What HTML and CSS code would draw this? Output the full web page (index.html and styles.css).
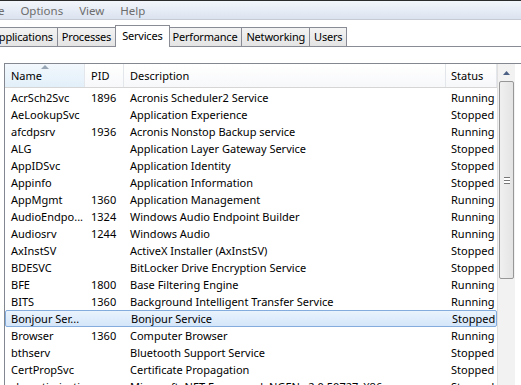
FILE: index.html
```html
<!DOCTYPE html>
<html lang="en">
<head>
    <meta charset="UTF-8">
    <title>Windows Task Manager - Services</title>
    <link rel="stylesheet" href="styles.css">
</head>
<body>

<div class="menubar">
    <span class="menu first">File</span>
    <span class="menu">Options</span>
    <span class="menu">View</span>
    <span class="menu">Help</span>
</div>

<div class="tabstrip">
    <div class="tab first">Applications</div>
    <div class="tab">Processes</div>
    <div class="tab active">Services</div>
    <div class="tab">Performance</div>
    <div class="tab">Networking</div>
    <div class="tab">Users</div>
</div>

<div class="panel">
    <div class="listview">
        <div class="list">
            <div class="row header">
                <div class="cell sorted">Name<span class="arrow"></span></div>
                <div class="cell">PID</div>
                <div class="cell">Description</div>
                <div class="cell">Status</div>
            </div>
            <div id="rows"></div>
        </div>
        <div class="scrollbar">
            <div class="btn-up"><svg width="7" height="4" viewBox="0 0 7 4"><path d="M0 4 L3.5 0 L7 4 Z" fill="#4d6185"/></svg></div>
            <div class="thumb"><div class="grip"></div></div>
        </div>
    </div>
</div>

<script>
    const services = [
        ['AcrSch2Svc', '1896', 'Acronis Scheduler2 Service', 'Running'],
        ['AeLookupSvc', '', 'Application Experience', 'Stopped'],
        ['afcdpsrv', '1936', 'Acronis Nonstop Backup service', 'Running'],
        ['ALG', '', 'Application Layer Gateway Service', 'Stopped'],
        ['AppIDSvc', '', 'Application Identity', 'Stopped'],
        ['Appinfo', '', 'Application Information', 'Stopped'],
        ['AppMgmt', '1360', 'Application Management', 'Running'],
        ['AudioEndpo...', '1324', 'Windows Audio Endpoint Builder', 'Running'],
        ['Audiosrv', '1244', 'Windows Audio', 'Running'],
        ['AxInstSV', '', 'ActiveX Installer (AxInstSV)', 'Stopped'],
        ['BDESVC', '', 'BitLocker Drive Encryption Service', 'Stopped'],
        ['BFE', '1800', 'Base Filtering Engine', 'Running'],
        ['BITS', '1360', 'Background Intelligent Transfer Service', 'Running'],
        ['Bonjour Ser...', '', 'Bonjour Service', 'Stopped'],
        ['Browser', '1360', 'Computer Browser', 'Running'],
        ['bthserv', '', 'Bluetooth Support Service', 'Stopped'],
        ['CertPropSvc', '', 'Certificate Propagation', 'Stopped'],
        ['clr_optimizatio...', '', 'Microsoft .NET Framework NGEN v2.0.50727_X86', 'Stopped']
    ];

    const rows = document.getElementById('rows');
    services.forEach(function(s) {
        const row = document.createElement('div');
        row.className = 'row';
        if (s[0] === 'Bonjour Ser...') row.className += ' selected';
        s.forEach(function(text) {
            const cell = document.createElement('div');
            cell.className = 'cell';
            cell.textContent = text;
            row.appendChild(cell);
        });
        rows.appendChild(row);
    });
</script>
</body>
</html>
```

FILE: styles.css
```css
body {
    margin: 0;
    font-family: "Noto Sans", "Open Sans", sans-serif;
    font-size: 11px;
    color: #000;
    background: #fff;
    overflow: hidden;
    height: 385px;
}
.menubar {
    height: 18px;
    border-top: 1px solid #2b2b2b;
    border-bottom: 1px solid #c5cad3;
    background: linear-gradient(#f3f6fb, #dbe3f0);
    display: flex;
    align-items: center;
    color: #6d6d6d;
    font-size: 11.5px;
}
.menu {
    padding: 0 8px;
}
.menu.first {
    margin-left: -22px;
}
.tabstrip {
    display: flex;
    align-items: flex-end;
    height: 26px;
    border-bottom: 1px solid #898c95;
    letter-spacing: -0.2px;
}
.tab {
    height: 18px;
    line-height: 18px;
    padding: 0 4px;
    margin-left: -1px;
    border: 1px solid #898c95;
    border-bottom: none;
    background: linear-gradient(#f3f3f3, #e4e4e4);
}
.tab.first {
    margin-left: -13px;
}
.tab.active {
    height: 21px;
    line-height: 19px;
    padding: 0 6px;
    margin: 0 -1px -1px -1px;
    background: #fff;
    position: relative;
}
.panel {
    padding: 16px 0 0 4px;
}
.listview {
    display: flex;
    border: 1px solid #828790;
    border-right: none;
    height: 330px;
}
.list {
    width: 492px;
    min-width: 0;
}
.row {
    display: grid;
    grid-template-columns: 80px 39px 322px 51px;
    height: 17px;
    line-height: 17px;
}
.row .cell {
    padding-left: 6px;
    white-space: nowrap;
    overflow: hidden;
}
.row .cell:last-child {
    padding-left: 5px;
}
.row.header {
    height: 23px;
    line-height: 23px;
    border-bottom: 1px solid #d5d5d5;
    margin-bottom: 1px;
    background: linear-gradient(#fff, #f7f8fa);
}
.header .cell {
    border-right: 1px solid #e3e6ea;
    position: relative;
}
.header .cell.sorted {
    background: linear-gradient(#f2f8fd, #e2eff9);
}
.arrow {
    position: absolute;
    left: 36px;
    top: 1px;
    border-left: 4px solid transparent;
    border-right: 4px solid transparent;
    border-bottom: 4px solid #97a5b4;
}
.row.selected {
    background: linear-gradient(#eaf3fd, #d4e6fa);
    border: 1px solid #84acdd;
    border-radius: 2px;
    height: 15px;
    line-height: 15px;
}
.selected .cell:first-child {
    padding-left: 5px;
}
.scrollbar {
    flex-shrink: 0;
    width: 17px;
    border-left: 1px solid #e0e0e0;
    background: #f2f2f2;
}
.btn-up {
    height: 17px;
    display: flex;
    justify-content: center;
    align-items: center;
}
.thumb {
    margin: 0 1px;
    height: 196px;
    border: 1px solid #979797;
    border-radius: 2px;
    background: linear-gradient(90deg, #f0f0f0, #e4e4e4);
    display: flex;
    justify-content: center;
    align-items: center;
}
.grip {
    width: 6px;
    height: 5px;
    border-top: 1px solid #777;
    border-bottom: 1px solid #777;
    background: linear-gradient(#fff 0 40%, #777 40% 60%, #fff 60%);
}
```
